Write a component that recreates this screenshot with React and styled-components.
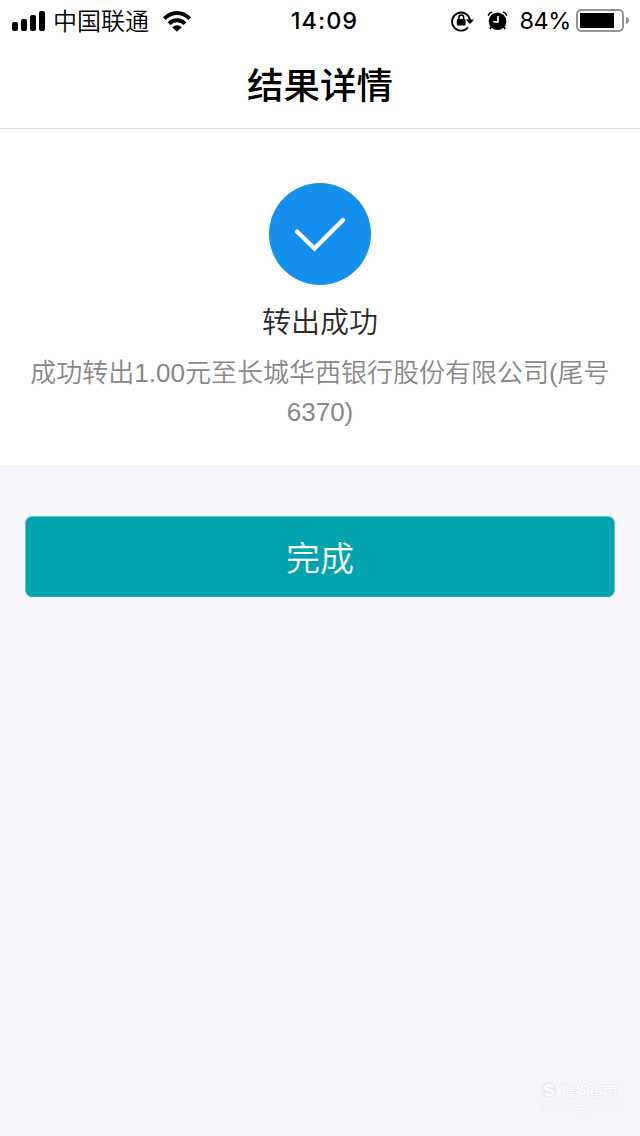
import React from "react";
import styled, { createGlobalStyle } from "styled-components";

const GlobalStyle = createGlobalStyle`
  * { box-sizing: border-box; }
  body {
    margin: 0;
    background: #f4f4fa;
    font-family: "Liberation Sans", "Noto Sans CJK SC", sans-serif;
  }
`;

const Screen = styled.div`
  display: flex;
  flex-direction: column;
  width: 640px;
  height: 1136px;
  background: #f4f4fa;
  overflow: hidden;
`;

const StatusBar = styled.header`
  display: grid;
  grid-template-columns: 1fr auto 1fr;
  align-items: center;
  height: 40px;
  padding: 0 10px 0 12px;
  background: #fff;
  color: #000;
`;

const StatusGroup = styled.div`
  display: flex;
  align-items: center;
  justify-content: ${(p) => (p.$end ? "flex-end" : "flex-start")};
  height: 40px;
  padding-top: 2px;
`;

const Carrier = styled.span`
  margin: 0 14px 0 7px;
  padding-bottom: 2px;
  font: 350 24px/36px "Noto Sans CJK SC", sans-serif;
  white-space: nowrap;
`;

const Time = styled.time`
  padding: 1px 0 0 7px;
  font: 550 23.500px/39px Inter, sans-serif;
  letter-spacing: 1px;
`;

const Percent = styled.span`
  margin: 0 5px 1px 11px;
  font: 400 23.500px/37px Inter, sans-serif;
  letter-spacing: -0.400px;
`;

const TitleBar = styled.div`
  display: flex;
  align-items: center;
  justify-content: center;
  height: 89px;
  padding-bottom: 1px;
  border-bottom: 1px solid #dedede;
  background: #fff;
`;

const Title = styled.h1`
  margin: 0;
  font: 500 36.500px/50px "Noto Sans CJK SC", sans-serif;
  color: #000;
`;

const ResultPanel = styled.main`
  display: flex;
  flex-direction: column;
  align-items: center;
  height: 336px;
  padding-top: 54px;
  background: #fff;
`;

const ResultTitle = styled.h2`
  margin: 13px 0 0;
  font: 350 29px/44px "Noto Sans CJK SC", sans-serif;
  color: #2b2b2b;
`;

const Message = styled.p`
  width: 590px;
  margin: 12px 0 0;
  font-size: 26px;
  font-weight: 350;
  line-height: 39px;
  text-align: center;
  color: #888;
`;

const DoneButton = styled.button`
  flex: none;
  width: 590px;
  height: 81px;
  margin: 51px auto 0;
  padding: 0;
  border: 1px solid #66c7cc;
  border-bottom-color: #1cabb2;
  border-radius: 7px;
  background: #01a4ac;
  color: #fff;
  font: 350 34px/78px "Noto Sans CJK SC", sans-serif;
`;

const Watermark = styled.footer`
  display: flex;
  flex-direction: column;
  align-items: flex-start;
  width: 80px;
  margin: auto 21px 23px auto;
  color: #fff;
  text-shadow: 0 0 2px #d8d8e2;
`;

const WatermarkBrand = styled.div`
  display: flex;
  align-items: center;
  gap: 2px;
  height: 22px;
  font: 400 14px/22px "Noto Sans CJK SC", sans-serif;
  white-space: nowrap;
`;

const WatermarkUrl = styled.div`
  font-size: 9.500px;
  line-height: 12px;
  white-space: nowrap;
`;

const Icon = styled.svg`
  display: block;
  flex: none;
  margin-right: ${(p) => p.$gap || 0}px;
`;

const SignalIcon = () => (
  <Icon width="34" height="20" viewBox="0 0 34 20">
    <rect x="0" y="11" width="6" height="9" rx="2" />
    <rect x="9" y="8" width="6" height="12" rx="2" />
    <rect x="18" y="4" width="6" height="16" rx="2" />
    <rect x="27" y="0" width="6" height="20" rx="2" />
  </Icon>
);

const WifiIcon = () => (
  <Icon width="28" height="21" viewBox="0 0 28 21">
    <g fill="none" stroke="#000" strokeWidth="3.9">
      <path d="M1.300 7.600Q7 2 14 2t12.700 5.600" />
      <path d="M6 12.700Q9.300 9.300 14 9.300t8 3.400" />
    </g>
    <path d="M9.200 16.300Q14 12.300 18.800 16.300L14 20.800Z" />
  </Icon>
);

const RotationLockIcon = () => (
  <Icon width="24" height="22" viewBox="0 0 24 22" $gap={12}>
    <path d="M17 17.300A9 9 0 1 1 18.900 10" fill="none" stroke="#000" strokeWidth="1.900" />
    <path d="M14.800 9.500h8.300L19 14Z" />
    <rect x="5.800" y="9" width="8.800" height="6.500" rx="1" />
    <path d="M7.900 10V7.300a2.350 2.350 0 0 1 4.700 0V10" fill="none" stroke="#000" strokeWidth="1.600" />
  </Icon>
);

const AlarmIcon = () => (
  <Icon width="21" height="20" viewBox="0 0 21 20">
    <circle cx="10.500" cy="10.300" r="8.800" />
    <path d="M1.500 4Q2.200 2 4.500 1.300M19.500 4Q18.800 2 16.500 1.300" fill="none" stroke="#000" strokeWidth="1.700" strokeLinecap="round" />
    <path d="M4.500 15.500L2.900 18M16.500 15.500l1.600 2.500" stroke="#000" strokeWidth="1.800" />
    <path d="M11 5V10.800H6.300" fill="none" stroke="#fff" strokeWidth="1.700" />
  </Icon>
);

const BatteryIcon = () => (
  <Icon width="54" height="24" viewBox="0 0 54 24">
    <rect x="1" y="1" width="46" height="21" rx="4" fill="none" stroke="#949494" strokeWidth="2" />
    <rect x="4" y="4" width="34" height="15" />
    <path d="M50 8Q53 9 53 11.500T50 15Z" fill="#949494" />
  </Icon>
);

const SuccessIcon = () => (
  <Icon width="102" height="102" viewBox="0 0 102 102">
    <circle cx="51" cy="51" r="51" fill="#148fed" />
    <path d="M28 48.500L45.500 65.500L74 37" fill="none" stroke="#fff" strokeWidth="4.400" strokeLinecap="round" />
  </Icon>
);

const WatermarkIcon = () => (
  <Icon width="20" height="20" viewBox="0 0 20 20">
    <circle cx="10" cy="10" r="8.500" fill="#ececf1" stroke="#f9f9fd" />
    <path d="M14 6.500Q6 3.800 6 7.500c0 3 8 1.500 8 5 0 3.500-7 2.500-8 1" fill="none" stroke="#fff" strokeWidth="2" />
  </Icon>
);

export default function App() {
  return (
    <Screen>
      <GlobalStyle />
      <StatusBar>
        <StatusGroup>
          <SignalIcon />
          <Carrier>中国联通</Carrier>
          <WifiIcon />
        </StatusGroup>
        <Time>14:09</Time>
        <StatusGroup $end>
          <RotationLockIcon />
          <AlarmIcon />
          <Percent>84%</Percent>
          <BatteryIcon />
        </StatusGroup>
      </StatusBar>
      <TitleBar>
        <Title>结果详情</Title>
      </TitleBar>
      <ResultPanel>
        <SuccessIcon />
        <ResultTitle>转出成功</ResultTitle>
        <Message>成功转出1.00元至长城华西银行股份有限公司(尾号6370)</Message>
      </ResultPanel>
      <DoneButton>完成</DoneButton>
      <Watermark>
        <WatermarkBrand>
          <WatermarkIcon />
          搜狗指南
        </WatermarkBrand>
        <WatermarkUrl>zhinan.sogou.com</WatermarkUrl>
      </Watermark>
    </Screen>
  );
}
